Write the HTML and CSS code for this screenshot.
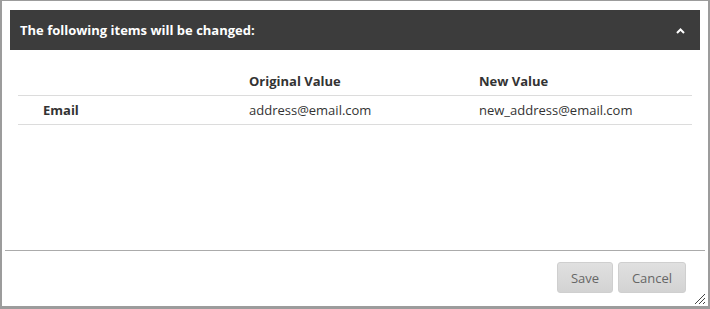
FILE: index.html
```html
<!DOCTYPE html>
<html>
<head>
<meta charset="utf-8">
<link rel="stylesheet" href="styles.css">
</head>
<body>
<div class="dialog">
  <div class="content">
    <div class="panel-header">
      <span class="title">The following items will be changed:</span>
      <svg class="chev" width="9" height="6" viewBox="0 0 9 6"><path d="M1 5 L4.5 1.5 L8 5" fill="none" stroke="#fff" stroke-width="2"/></svg>
    </div>
    <table class="changes">
      <thead>
        <tr><th class="c1"></th><th class="c2">Original Value</th><th class="c3">New Value</th></tr>
      </thead>
      <tbody>
        <tr><td class="c1 label">Email</td><td class="c2">address@email.com</td><td class="c3">new_address@email.com</td></tr>
      </tbody>
    </table>
  </div>
  <div class="footer">
    <button class="btn">Save</button>
    <button class="btn btn-cancel">Cancel</button>
  </div>
  <svg class="grip" width="12" height="12" viewBox="0 0 12 12"><path d="M11 1 L1 11 M11 5 L5 11 M11 9 L9 11" stroke="#444" stroke-width="1" fill="none"/></svg>
</div>
</body>
</html>
```
FILE: styles.css
```css
html, body { margin: 0; padding: 0; background: #fff; }
body { font-family: "Open Sans", "Liberation Sans", sans-serif; font-size: 13px; color: #333; }
.dialog {
  position: relative;
  width: 710px; height: 309px; box-sizing: border-box;
  border-style: solid; border-color: #9c9c9c;
  border-width: 1px 2px 3px 2px;
  background: #fff;
  display: flex; flex-direction: column;
}
.content { flex: 1; padding: 9px 8px 0 8px; }
.panel-header {
  height: 40px; background: #3c3c3c; color: #fff;
  display: flex; align-items: center; justify-content: space-between;
  padding: 0 15px 0 10px;
}
.title { font-weight: 700; font-size: 13px; }
.chev { display: block; margin-top: 1px; }
.changes {
  width: 674px; margin: 17px 8px 0 8px; border-collapse: collapse;
}
.changes th, .changes td { padding: 0; height: 28px; text-align: left; vertical-align: middle; }
.changes th { font-weight: 700; color: #333; }
.changes thead tr { border-bottom: 1px solid #dcdcdc; }
.changes tbody tr { border-bottom: 1px solid #dcdcdc; }
.changes td { color: #333; }
.c1 { width: 231px; }
.c2 { width: 230px; }
.label { font-weight: 700; padding-left: 25px !important; box-sizing: border-box; }
.footer {
  margin: 0 3px; border-top: 1px solid #ababab;
  height: 56px; box-sizing: border-box;
  display: flex; justify-content: flex-end; align-items: flex-start;
  padding: 11px 19px 0 0; gap: 5px;
}
.btn {
  font-family: inherit; font-size: 13px; color: #666;
  height: 31px; border: 1px solid #cfcfcf; border-radius: 3px;
  background: linear-gradient(#e0e0e0, #d3d3d3);
  padding: 0; width: 56px;
}
.btn-cancel { width: 68px; }
.grip { position: absolute; right: 2px; bottom: 1px; }
```
